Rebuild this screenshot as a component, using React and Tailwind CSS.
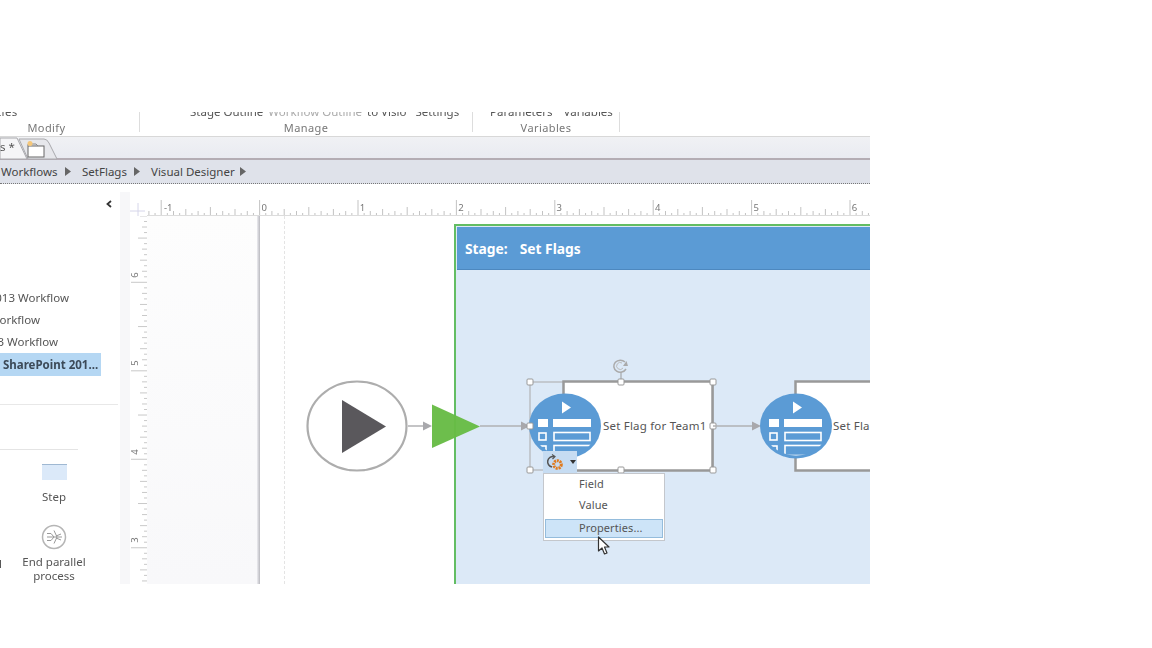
import React from 'react';

const font = { fontFamily: '"Noto Sans", "Open Sans", sans-serif' };

const hTicks = Array.from({ length: 120 }, (_, i) => i - 4);

// one flowchart action: blue circle with the form glyph, clipped to the circle
const ActionIcon = ({ cx, id }) => (
    <g>
        <clipPath id={id}>
            <ellipse cx={cx} cy="426" rx="33" ry="29.500" />
        </clipPath>
        <ellipse cx={cx} cy="426" rx="36" ry="32.500" fill="#5b9bd5" />
        <path d={`M${cx - 3} 401.500 L${cx + 6} 407.500 L${cx - 3} 413.500 Z`} fill="#fff" />
        <g clipPath={`url(#${id})`}>
            <rect x={cx - 27} y="419" width="10" height="8" fill="#fff" />
            <rect x={cx - 12} y="419" width="38" height="8" fill="#fff" />
            <rect x={cx - 26} y="433" width="7" height="7" fill="none" stroke="#fff" strokeWidth="1.600" />
            <rect x={cx - 11} y="432.500" width="36" height="8" fill="none" stroke="#fff" strokeWidth="1.600" />
            <rect x={cx - 26} y="446" width="7" height="10" fill="none" stroke="#fff" strokeWidth="1.600" />
            <rect x={cx - 11} y="445.500" width="36" height="10" fill="none" stroke="#fff" strokeWidth="1.600" />
        </g>
    </g>
);

const Handle = ({ x, y }) => (
    <rect x={x - 3} y={y - 3} width="6" height="6" rx="1" fill="#fff" stroke="#999" strokeWidth="1" />
);

const Arrow = ({ x1, x2 }) => (
    <g>
        <line x1={x1} x2={x2 - 8} y1="426" y2="426" stroke="#b0b0b3" strokeWidth="1.500" />
        <path d={`M${x2 - 9} 421.500 L${x2} 426 L${x2 - 9} 430.500 Z`} fill="#a8a8ac" />
    </g>
);

const TopRuler = () => (
    <svg className="block" width="723" height="32" viewBox="147 184 723 32">
        {hTicks.map((i) => {
            const x = 161.2 + i * 6.15;
            const h = i % 16 === 0 ? 16 : i % 8 === 0 ? 9 : i % 4 === 0 ? 7 : i % 2 === 0 ? 5 : 3;
            return <line key={i} x1={x} x2={x} y1={216 - h} y2="216" stroke="#b4b4b4" strokeWidth="0.800" />;
        })}
        <line x1="147" x2="870" y1="215.500" y2="215.500" stroke="#dcdcdc" />
        {[-1, 0, 1, 2, 3, 4, 5, 6].map((n, i) => (
            <text key={n} x={164 + i * 98.4 - (n < 0 ? 0 : 1)} y="211" fontSize="9.500" fill="#777" style={font}>{n}</text>
        ))}
    </svg>
);

const SideRuler = () => (
    <svg className="block shrink-0" width="17" height="368" viewBox="130 216 17 368">
        {Array.from({ length: 70 }, (_, i) => i).map((i) => {
            const y = 548 + 44 - i * 5.53;
            const k = i - 8;
            const h = k % 16 === 0 ? 16 : k % 8 === 0 ? 9 : k % 4 === 0 ? 7 : k % 2 === 0 ? 5 : 3;
            return <line key={i} x1={147 - h} x2="147" y1={y} y2={y} stroke="#bbb" strokeWidth="0.800" />;
        })}
        {[[6, 275], [5, 363], [4, 452], [3, 540]].map(([n, y]) => (
            <text key={n} x="138" y={y} fontSize="9.500" fill="#777" textAnchor="middle" transform={`rotate(-90 138 ${y})`} style={font}>{n}</text>
        ))}
    </svg>
);

const Diagram = () => (
    <svg className="absolute left-0 top-0" width="723" height="368" viewBox="147 216 723 368">
        <ellipse cx="357" cy="426" rx="49.500" ry="44.500" fill="#fff" stroke="#adadad" strokeWidth="2.200" />
        <path d="M342 400 L386 426.500 L342 453 Z" fill="#5a585c" />
        <Arrow x1="408" x2="432" />
        <path d="M432 404.500 L480 426.500 L432 448 Z" fill="#67bb45" fillOpacity="0.96" />
        <Arrow x1="480" x2="530" />

        <rect x="530" y="382" width="183" height="88" fill="none" stroke="#aaa" strokeWidth="1" />
        <rect x="563.500" y="381.500" width="149" height="89" fill="#fff" stroke="#999" strokeWidth="2.500" />
        <ActionIcon cx={565} id="node-a" />
        <line x1="621" x2="621" y1="372" y2="381" stroke="#999" />
        {/* rotate handle */}
        <path d="M625 362 A6.500 6 0 1 0 626 369" fill="none" stroke="#aaa" strokeWidth="1.500" />
        <path d="M622 363 A3.500 3.500 0 1 0 623 368" fill="none" stroke="#bbb" strokeWidth="1" />
        <path d="M623 366 L628 366 L626.500 361 Z" fill="#aaa" />
        {[[530, 382], [621, 382], [713, 382], [530, 426], [713, 426], [530, 470], [621, 470], [713, 470]].map(([x, y]) => (
            <Handle key={`${x}-${y}`} x={x} y={y} />
        ))}

        <Arrow x1="713" x2="761" />
        <rect x="795.500" y="381.500" width="120" height="89" fill="#fff" stroke="#999" strokeWidth="2.500" />
        <ActionIcon cx={796} id="node-b" />
    </svg>
);

const Canvas = () => (
    <div className="relative flex-1 overflow-hidden flex bg-white">
        <div className="w-[110px] h-full bg-gradient-to-b from-[#fdfdfd] to-[#f8f8fa]" />
        <div className="w-[3px] h-full bg-gradient-to-r from-[#ececf0] to-[#b9b9bf]" />
        <div className="ml-[24px] h-full border-l border-dashed border-[#e4e4e4]" />

        {/* stage */}
        <div className="absolute left-[307px] top-[8px] w-[420px] h-[372px] border-l-2 border-t-2 border-[#63bd63] bg-[#dce9f7] pl-[1px] pt-[1px]">
            <div className="h-[43px] bg-[#5b9bd5] border-b border-[#4d88bf] flex items-center pl-[8px] pt-[2px] gap-[12px] text-white text-[13.800px] font-bold" style={font}>
                <span>Stage:</span>
                <span>Set Flags</span>
            </div>
        </div>

        <Diagram />

        <span className="absolute left-[456px] top-[201px] text-[11.500px] leading-[18px] tracking-[0.2px] text-[#555] whitespace-nowrap" style={font}>Set Flag for Team1</span>
        <span className="absolute left-[686px] top-[201px] text-[11.500px] leading-[18px] tracking-[0.2px] text-[#555] whitespace-nowrap" style={font}>Set Flag for Team2</span>

        {/* smart tag + menu */}
        <div className="absolute left-[396px] top-[235px] w-[34px] h-[22px] bg-[#c6dcf2] flex items-center pl-[3px] gap-[6px]">
            <svg width="18" height="16" viewBox="0 0 18 16">
                <path d="M8 2.500 A5 5 0 1 0 6 13" fill="none" stroke="#555" strokeWidth="1.500" />
                <path d="M6 0.500 L9 2.500 L6.500 5" fill="none" stroke="#555" strokeWidth="1.200" />
                <circle cx="11.500" cy="10.500" r="3.800" fill="none" stroke="#e07b1f" strokeWidth="3" strokeDasharray="2 0.800" />
            </svg>
            <svg width="6" height="4" viewBox="0 0 6 4"><path d="M0 0 H6 L3 4 Z" fill="#333" /></svg>
        </div>
        <div className="absolute left-[396px] top-[257px] w-[122px] h-[68px] bg-white border border-[#c4c7cc] p-[1px] text-[11px] tracking-[0.1px] text-[#555]" style={font}>
            <div className="h-[19px] pl-[34px] flex items-center">Field</div>
            <div className="h-[22px] pl-[34px] flex items-center">Value</div>
            <div className="mt-[3px] h-[19px] pl-[33px] flex items-center bg-[#cde4f8] border border-[#94bcdc]">Properties...</div>
        </div>
        <svg className="absolute left-[450px] top-[320px]" width="16" height="20" viewBox="0 0 16 20">
            <path d="M1.500 1 V15 L5 12 L7.500 18 L10 17 L7.500 11 H12 Z" fill="#fff" stroke="#333" strokeWidth="1.200" strokeLinejoin="round" />
        </svg>
    </div>
);

const LeftPanel = () => (
    <div className="w-[120px] shrink-0 h-full relative overflow-hidden text-[11.500px] text-[#555]" style={font}>
        <div className="h-[32px] flex items-end justify-end pr-[8px] pb-[8px]">
            <svg width="6" height="8" viewBox="0 0 6 8"><path d="M5 1 L1.500 4 L5 7" fill="none" stroke="#333" strokeWidth="1.800" /></svg>
        </div>
        <div className="pt-[71px] w-[101px]">
            <div className="h-[22px] flex items-center justify-end whitespace-nowrap pr-[32px]">013 Workflow</div>
            <div className="h-[22px] flex items-center justify-end whitespace-nowrap pr-[61px]">orkflow</div>
            <div className="h-[22px] flex items-center justify-end whitespace-nowrap pr-[43px]">3 Workflow</div>
            <div className="h-[23px] flex items-center pl-[3px] bg-[#b5d7f3] font-bold text-[#3c4a58] whitespace-nowrap">SharePoint 201...</div>
        </div>
        <div className="mt-[28px] h-px bg-[#e8e8e8] w-[118px]" />
        <div className="mt-[44px] h-px bg-[#e4e4e4] w-[78px]" />
        <div className="w-[108px] flex flex-col items-center pt-[14px]">
            <div className="w-[25px] h-[16px] bg-[#dbe9f9] border-t border-[#9fb8d2]" />
            <div className="mt-[9px] h-[16px] leading-[16px]">Step</div>
            <svg className="mt-[19px]" width="26" height="26" viewBox="0 0 26 26">
                <circle cx="13" cy="13" r="11.500" fill="#fff" stroke="#b5b5b5" strokeWidth="1.500" />
                <path d="M6 13 H21 M6 9.500 L10 9.500 L13 13 L10 16.500 L6 16.500 M13 6.500 L16 13 L13 19.500 M15 12 L20 10 M15 14 L20 16" fill="none" stroke="#999" strokeWidth="1" />
            </svg>
            <div className="mt-[5px] leading-[14px] text-center">End parallel<br />process</div>
        </div>
        <span className="absolute left-[-1px] top-[372px] leading-[16px]">l</span>
    </div>
);

const Caret = ({ className }) => (
    <svg className={className} width="6" height="9" viewBox="0 0 6 9"><path d="M0 0 L6 4.500 L0 9 Z" fill="#666" /></svg>
);

const App = () => {
    return (
        <div className="w-[1152px] h-[648px] bg-white overflow-hidden pt-[112px]">
            <div className="w-[870px] h-[472px] overflow-hidden flex flex-col blur-[0.5px]" style={font}>
                {/* ribbon, cropped at the top */}
                <div className="h-[24px] shrink-0 flex text-[#777] text-[11px] tracking-[0.4px]">
                    <div className="w-[140px] pr-[46px] border-r border-[#ddd] h-[20px] flex flex-col items-center justify-end relative">
                        <span className="absolute left-[-3px] top-[-9px] text-[11.500px] text-[#555]">ties</span>
                        <span className="leading-[14px] translate-y-[3px]">Modify</span>
                    </div>
                    <div className="w-[333px] border-r border-[#ddd] h-[20px] flex flex-col items-center justify-end relative">
                        <span className="absolute left-[50px] top-[-9px] text-[11.500px] tracking-normal text-[#555] whitespace-nowrap">Stage Outline <span className="text-[#aaa] ml-0.5">Workflow Outline</span> <span className="ml-0.5">to Visio</span> <span className="ml-1.5">Settings</span></span>
                        <span className="leading-[14px] translate-y-[3px]">Manage</span>
                    </div>
                    <div className="w-[147px] border-r border-[#ddd] h-[20px] flex flex-col items-center justify-end relative">
                        <span className="absolute left-[17px] top-[-9px] text-[11.500px] tracking-normal text-[#555] whitespace-nowrap">Parameters <span className="ml-2">Variables</span></span>
                        <span className="leading-[14px] translate-y-[3px]">Variables</span>
                    </div>
                </div>

                {/* tabs */}
                <div className="h-[24px] shrink-0 bg-gradient-to-b from-[#f0f1f4] to-[#e9ebf1] border-t border-[#d8d8d8] border-b-2 border-b-[#b4adb4] flex items-end text-[11.500px] text-[#555] relative">
                    <svg className="absolute left-0 top-0" width="62" height="23" viewBox="0 0 62 23">
                        <path d="M19 2 H44 Q47 2 49 6 L57 22 H28 Z" fill="#e6e7eb" stroke="#a9a9ad" />
                        <path d="M0 1 H17 L27 22 H0 Z" fill="#f5f5f7" stroke="#a9a9ad" />
                        <rect x="28" y="9" width="16" height="11" fill="#fff" stroke="#666" />
                        <path d="M28 9 V7 H36 L38 9" fill="none" stroke="#888" />
                        <circle cx="30" cy="6.500" r="2.500" fill="#f5c77a" />
                    </svg>
                    <span className="relative leading-[20px] mb-[1px]">s *</span>
                </div>

                {/* breadcrumb */}
                <div className="h-[24px] shrink-0 bg-[#dfe2ea] border-b border-dotted border-[#777] flex items-center text-[11.500px] text-[#444]">
                    <span className="pl-[1px] w-[65px]">Workflows</span>
                    <Caret className="shrink-0" />
                    <span className="pl-[11px] w-[63px]">SetFlags</span>
                    <Caret className="shrink-0" />
                    <span className="pl-[11px] w-[100px] whitespace-nowrap">Visual Designer</span>
                    <Caret className="shrink-0" />
                </div>

                {/* body */}
                <div className="flex-1 min-h-0 flex">
                    <LeftPanel />
                    <div className="w-[10px] shrink-0 mt-[8px] bg-[#f7f7f9]" />
                    <div className="flex-1 min-w-0 flex flex-col">
                        <div className="h-[32px] shrink-0 flex">
                            <div className="w-[17px] shrink-0 relative">
                                <svg className="absolute left-0 top-[19px]" width="17" height="13" viewBox="0 0 17 13">
                                    <path d="M8 0 V13 M0 8 H15" stroke="#d6d6ea" strokeWidth="1" />
                                </svg>
                            </div>
                            <TopRuler />
                        </div>
                        <div className="flex-1 min-h-0 flex">
                            <SideRuler />
                            <Canvas />
                        </div>
                    </div>
                </div>
            </div>
        </div>
    );
};

export default App;
